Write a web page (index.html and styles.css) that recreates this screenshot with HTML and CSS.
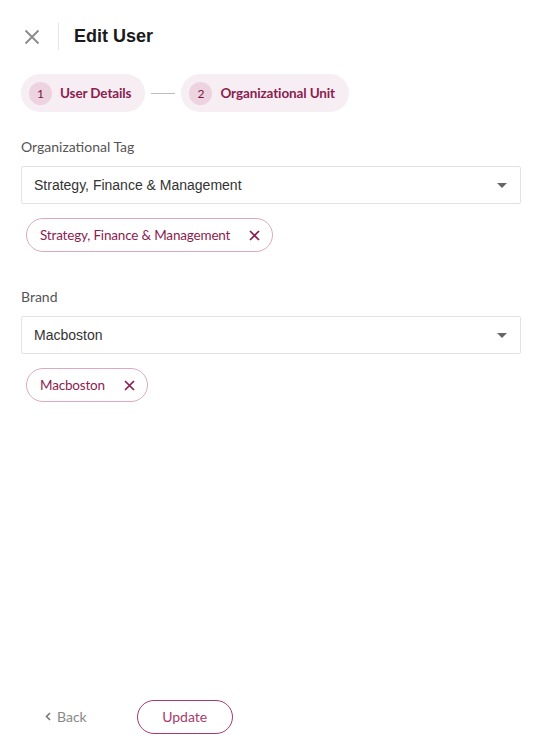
FILE: index.html
```html
<!DOCTYPE html>
<html>
<head>
<meta charset="utf-8">
<link rel="stylesheet" href="styles.css">
</head>
<body>
<div class="page">
  <header class="header">
    <button class="close" aria-label="Close">
      <svg width="16" height="16" viewBox="0 0 16 16"><path d="M1.5 1.5L14.5 14.5M14.5 1.5L1.5 14.5" stroke="#8a8a8a" stroke-width="1.8" fill="none"/></svg>
    </button>
    <span class="divider"></span>
    <h1 class="title">Edit User</h1>
  </header>

  <div class="stepper">
    <div class="step"><span class="num">1</span><span class="step-label">User Details</span></div>
    <span class="connector"></span>
    <div class="step"><span class="num">2</span><span class="step-label">Organizational Unit</span></div>
  </div>

  <div class="field">
    <label class="label">Organizational Tag</label>
    <div class="select"><span>Strategy, Finance &amp; Management</span><span class="caret"></span></div>
    <div class="chips">
      <span class="chip">Strategy, Finance &amp; Management
        <svg width="11" height="11" viewBox="0 0 11 11"><path d="M1 1L10 10M10 1L1 10" stroke="#8b1d50" stroke-width="1.7" fill="none"/></svg>
      </span>
    </div>
  </div>

  <div class="field field-2">
    <label class="label">Brand</label>
    <div class="select"><span>Macboston</span><span class="caret"></span></div>
    <div class="chips">
      <span class="chip">Macboston
        <svg width="11" height="11" viewBox="0 0 11 11"><path d="M1 1L10 10M10 1L1 10" stroke="#8b1d50" stroke-width="1.7" fill="none"/></svg>
      </span>
    </div>
  </div>

  <div class="spacer"></div>

  <footer class="footer">
    <button class="back">
      <svg width="6" height="9" viewBox="0 0 6 9"><path d="M5 1L1.5 4.5L5 8" stroke="#777" stroke-width="1.6" fill="none"/></svg>
      Back
    </button>
    <button class="update">Update</button>
  </footer>
</div>
</body>
</html>
```

FILE: styles.css
```css
* { box-sizing: border-box; }
html, body { margin: 0; padding: 0; background: #fff; }
body { font-family: "Source Sans Pro", Lato, "Noto Sans", sans-serif; }
.page {
  width: 540px;
  height: 756px;
  display: flex;
  flex-direction: column;
  padding: 0 19px 0 21px;
}
.header {
  display: flex;
  align-items: center;
  height: 73px;
}
.close {
  border: 0;
  background: none;
  padding: 0;
  width: 16px;
  height: 16px;
  margin-left: 3px;
  display: flex;
}
.divider {
  width: 1px;
  height: 27px;
  background: #e4e4e4;
  margin: 0 15px 0 18px;
}
.title {
  margin: 0;
  font-family: "Liberation Sans", Arial, sans-serif;
  font-weight: 700;
  font-size: 18px;
  color: #1a1a1a;
}
.stepper {
  display: flex;
  align-items: center;
  height: 38px;
  margin-top: 1px;
}
.step {
  display: flex;
  align-items: center;
  height: 38px;
  padding: 0 14px 0 8px;
  border-radius: 19px;
  background: #f6eef2;
}
.num {
  width: 23px;
  height: 23px;
  border-radius: 50%;
  background: #ecd3df;
  color: #7a1745;
  font-size: 12px;
  display: flex;
  align-items: center;
  justify-content: center;
  margin-right: 8px;
}
.step-label {
  font-weight: 700;
  font-size: 13.5px;
  letter-spacing: -0.12px;
  color: #8b1d50;
}
.connector {
  width: 24px;
  height: 1px;
  background: #bdbdbd;
  margin: 0 6px;
}
.field { margin-top: 26px; }
.field-2 { margin-top: 36px; }
.label {
  display: block;
  font-size: 14px;
  color: #555;
  line-height: 18px;
}
.select {
  margin-top: 10px;
  height: 38px;
  border: 1px solid #e2e2e2;
  border-radius: 2px;
  display: flex;
  align-items: center;
  justify-content: space-between;
  padding: 0 13px 0 12px;
  font-family: "Liberation Sans", Arial, sans-serif;
  font-size: 14px;
  color: #333;
}
.caret {
  width: 0;
  height: 0;
  border-left: 5px solid transparent;
  border-right: 5px solid transparent;
  border-top: 5px solid #666;
}
.chips {
  display: flex;
  margin-top: 14px;
  padding-left: 5px;
}
.chip {
  display: inline-flex;
  align-items: center;
  height: 34px;
  padding: 0 12px 0 13px;
  border: 1px solid #dcaac0;
  border-radius: 17px;
  font-size: 13.5px;
  letter-spacing: -0.18px;
  color: #8b1d50;
  gap: 19px;
}
.spacer { flex: 1; }
.footer {
  display: flex;
  align-items: center;
  height: 34px;
  margin-bottom: 22px;
}
.back {
  border: 0;
  background: none;
  font-family: inherit;
  font-size: 14px;
  color: #888;
  display: flex;
  align-items: center;
  gap: 6px;
  padding: 0 0 2px;
  margin-left: 24px;
}
.update {
  margin-left: 50px;
  width: 96px;
  height: 34px;
  border: 1px solid #a63a6b;
  border-radius: 17px;
  background: #fff;
  font-family: inherit;
  font-size: 14px;
  color: #a63a6b;
  padding-bottom: 2px;
}
```
